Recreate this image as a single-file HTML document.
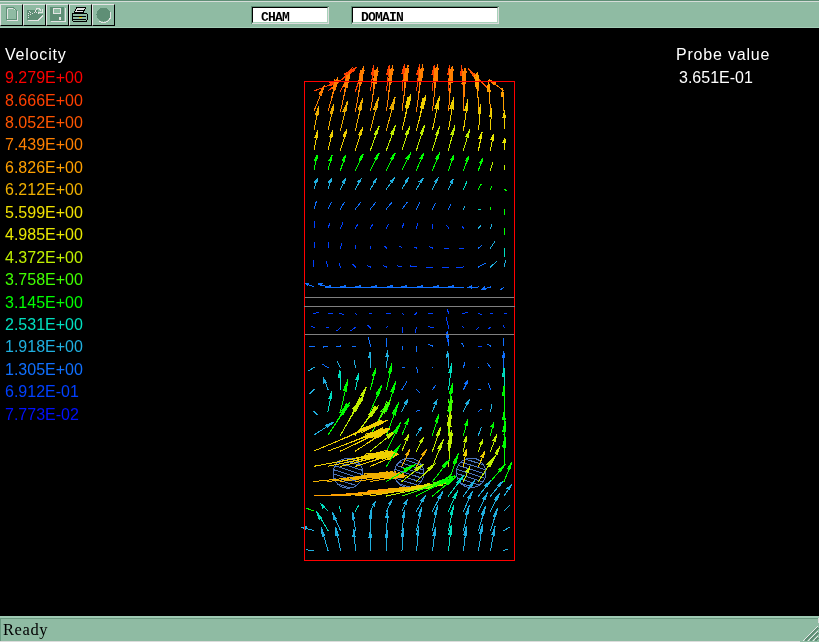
<!DOCTYPE html>
<html><head><meta charset="utf-8"><style>
html,body{margin:0;padding:0;}
body{width:819px;height:642px;overflow:hidden;background:#000;position:relative;font-family:"Liberation Sans",sans-serif;}
.abs{position:absolute;}
#tb{left:0;top:0;width:819px;height:28px;background:#8fbba3;}
#tb .r0{left:0;top:0;width:819px;height:1px;background:#5f8f76;}
#tb .r1{left:0;top:1px;width:819px;height:1px;background:#d4dcd8;}
#tb .r26{left:0;top:27px;width:819px;height:1px;background:#a3cdb6;}
.btn{top:4px;width:23px;height:22px;box-sizing:border-box;border-top:1px solid #e4e4e4;border-left:1px solid #e4e4e4;border-right:1px solid #000;border-bottom:1px solid #000;}
.fld{top:6px;height:18px;box-sizing:border-box;background:#dcdcdc;border-top:1px solid #5f8f76;border-left:1px solid #5f8f76;}
.fld .in{left:0;top:0;right:0;bottom:1px;box-sizing:border-box;background:#fff;border-top:1px solid #000;border-left:1px solid #000;border-right:1px solid #a8d2ba;border-bottom:1px solid #a8d2ba;right:1px;}
.fld span{will-change:transform;font-family:"Liberation Mono",monospace;font-weight:bold;font-size:13px;line-height:13px;color:#000;letter-spacing:-0.8px;}
.leg{left:5px;font-size:16px;line-height:18px;white-space:nowrap;will-change:transform;}
#sb{left:0;top:616px;width:819px;height:26px;background:#8fbba3;}
</style></head><body>

<div id="tb" class="abs"><div class="abs r0"></div><div class="abs r1"></div><div class="abs r26"></div>
<div class="abs btn" style="left:0px"></div>
<div class="abs btn" style="left:23px"></div>
<div class="abs btn" style="left:46px"></div>
<div class="abs btn" style="left:69px"></div>
<div class="abs btn" style="left:92px"></div>
<div class="abs fld" style="left:251px;width:78px;"><div class="abs in"></div><span class="abs" style="left:9px;top:4px">CHAM</span></div>
<div class="abs fld" style="left:351px;width:148px;"><div class="abs in"></div><span class="abs" style="left:9px;top:4px">DOMAIN</span></div>
<svg class="abs" style="left:0;top:0" width="120" height="28" viewBox="0 0 120 28" shape-rendering="crispEdges">
<g fill="none" stroke-width="1">
<path d="M6.5 7.5H13.5L16.5 10.5V19.5H6.5Z" stroke="#5f8f76"/>
<path d="M7.5 8.5H13V11H15.5V18.5H7.5Z" fill="#8fbba3" stroke="#e4e4e4" stroke-width="0" />
<path d="M7.5 8.5V18.5M8 8.5H12.5" stroke="#e4e4e4"/>
<path d="M17.5 11V20.5H7" stroke="#e4e4e4"/>
<rect x="14" y="9" width="1" height="1" fill="#e4e4e4"/>
<path d="M27 10H38V20H27Z" fill="#5f8f76"/>
<path d="M29 14H43L38 20H27Z" fill="#5f8f76"/>
<path d="M28 20.5H38L43 15.5" stroke="#e4e4e4"/>
<path d="M35.5 11.5V10.5L37 8.5H39L41 10.5" stroke="#e4e4e4"/>
<path d="M42 9V12H39" stroke="#e4e4e4"/>
<g fill="#e4e4e4"><rect x="28" y="13" width="1" height="1"/><rect x="28" y="15" width="1" height="1"/><rect x="28" y="17" width="1" height="1"/><rect x="30" y="12" width="1" height="1"/><rect x="30" y="14" width="1" height="1"/><rect x="32" y="13" width="1" height="1"/><rect x="29" y="11" width="1" height="1"/><rect x="34" y="12" width="1" height="1"/><rect x="36" y="12" width="1" height="1"/><rect x="38" y="12" width="1" height="2"/></g>
<rect x="50" y="7" width="14" height="14" fill="#5f8f76"/>
<rect x="53.5" y="8.5" width="7" height="5" fill="#8fbba3" stroke="#e4e4e4"/>
<rect x="59" y="17" width="2" height="3" fill="#e4e4e4"/>
<path d="M51 21.5H65.5V8" stroke="#e4e4e4"/>
<path d="M76.5 7.5H85.5L83.5 12.5H74.5Z" fill="#e4e4e4" stroke="#000"/>
<path d="M77 10H84" stroke="#000"/>
<path d="M72.5 13.5H86.5L87.5 15V19.5L86 21.5H73.5L72.5 20Z" fill="#8fbba3" stroke="#000"/>
<path d="M73 16.5H86M73 19H86" stroke="#000"/>
<rect x="79" y="17" width="3" height="1" fill="#e8c800"/>
<circle cx="103.5" cy="14.5" r="7" fill="#5f8f76"/>
<path d="M110 12A7.3 7.3 0 0 1 99 21" stroke="#e4e4e4"/>
</g>
</svg>
</div>
<div class="abs leg" style="top:46px;color:#fff;letter-spacing:0.8px">Velocity</div>
<div class="abs leg" style="top:69.0px;color:#ff0000">9.279E+00</div>
<div class="abs leg" style="top:91.5px;color:#ff4000">8.666E+00</div>
<div class="abs leg" style="top:113.9px;color:#ff5500">8.052E+00</div>
<div class="abs leg" style="top:136.3px;color:#ff8000">7.439E+00</div>
<div class="abs leg" style="top:158.8px;color:#ffa000">6.826E+00</div>
<div class="abs leg" style="top:181.2px;color:#f0b000">6.212E+00</div>
<div class="abs leg" style="top:203.7px;color:#f0e000">5.599E+00</div>
<div class="abs leg" style="top:226.2px;color:#e8e800">4.985E+00</div>
<div class="abs leg" style="top:248.6px;color:#c0f000">4.372E+00</div>
<div class="abs leg" style="top:271.0px;color:#40ff00">3.758E+00</div>
<div class="abs leg" style="top:293.5px;color:#00ff00">3.145E+00</div>
<div class="abs leg" style="top:315.9px;color:#00e0c0">2.531E+00</div>
<div class="abs leg" style="top:338.4px;color:#20b0e0">1.918E+00</div>
<div class="abs leg" style="top:360.8px;color:#1070ff">1.305E+00</div>
<div class="abs leg" style="top:383.3px;color:#0040ff">6.912E-01</div>
<div class="abs leg" style="top:405.8px;color:#0010ff">7.773E-02</div>
<div class="abs leg" style="left:676px;top:46px;color:#fff;letter-spacing:0.8px">Probe value</div>
<div class="abs leg" style="left:679px;top:69px;color:#fff">3.651E-01</div>
<svg class="abs" style="left:0;top:0" width="819" height="642" viewBox="0 0 819 642" shape-rendering="crispEdges">
<g fill="none" stroke-width="1" stroke-linecap="square"><defs><clipPath id="cc0"><circle cx="348.0" cy="473.3" r="14.9"/></clipPath><clipPath id="cc1"><circle cx="409.2" cy="473.0" r="14.8"/></clipPath><clipPath id="cc2"><circle cx="471.1" cy="472.8" r="14.8"/></clipPath></defs><circle cx="348.0" cy="473.3" r="14.9" stroke="#4c74bc" fill="none"/><path clip-path="url(#cc0)" d="M331.1 443.1L364.9 453.9M331.1 447.4L364.9 458.2M331.1 451.7L364.9 462.5M331.1 456.0L364.9 466.8M331.1 460.3L364.9 471.1M331.1 464.6L364.9 475.4M331.1 468.9L364.9 479.7M331.1 473.2L364.9 484.0M331.1 477.5L364.9 488.3M331.1 481.8L364.9 492.6M331.1 486.1L364.9 496.9M331.1 490.4L364.9 501.2M331.1 494.7L364.9 505.5" stroke="#4c74bc" stroke-dasharray="3 1"/><circle cx="409.2" cy="473.0" r="14.8" stroke="#4c74bc" fill="none"/><path clip-path="url(#cc1)" d="M392.4 442.8L426.0 453.6M392.4 447.1L426.0 457.9M392.4 451.4L426.0 462.2M392.4 455.7L426.0 466.5M392.4 460.0L426.0 470.8M392.4 464.3L426.0 475.1M392.4 468.6L426.0 479.4M392.4 472.9L426.0 483.7M392.4 477.2L426.0 488.0M392.4 481.5L426.0 492.3M392.4 485.8L426.0 496.6M392.4 490.1L426.0 500.9M392.4 494.4L426.0 505.2" stroke="#4c74bc" stroke-dasharray="3 1"/><circle cx="471.1" cy="472.8" r="14.8" stroke="#4c74bc" fill="none"/><path clip-path="url(#cc2)" d="M454.3 442.6L487.9 453.4M454.3 446.9L487.9 457.7M454.3 451.2L487.9 462.0M454.3 455.5L487.9 466.3M454.3 459.8L487.9 470.6M454.3 464.1L487.9 474.9M454.3 468.4L487.9 479.2M454.3 472.7L487.9 483.5M454.3 477.0L487.9 487.8M454.3 481.3L487.9 492.1M454.3 485.6L487.9 496.4M454.3 489.9L487.9 500.7M454.3 494.2L487.9 505.0" stroke="#4c74bc" stroke-dasharray="3 1"/><path d="M314.0 91.0L340.0 81.0" stroke="#ff4000"/><path d="M340.0 81.0L330.0 82.9L331.0 85.4Z" fill="#ff4000" fill-opacity="0.90" stroke="#ff4000" stroke-width="1"/><path d="M328.0 91.0L356.4 67.4" stroke="#ff4000"/><path d="M356.4 67.4L344.6 74.0L346.9 76.8Z" fill="#ff4000" fill-opacity="0.25" stroke="#ff4000" stroke-width="1"/><path d="M340.8 80.4L352.5 67.4" stroke="#ff4000"/><path d="M345.0 76.8L354.9 70.2" stroke="#ff4000"/><path d="M336.5 83.9L353.4 68.4" stroke="#ff4000"/><path d="M340.5 91.0L350.5 72.0" stroke="#ff4000"/><path d="M350.5 72.0L345.5 78.1L347.6 79.2Z" fill="#ff4000" fill-opacity="0.90" stroke="#ff4000" stroke-width="1"/><path d="M355.5 91.0L363.5 67.0" stroke="#ff4000"/><path d="M363.5 67.0L359.1 75.1L361.4 75.9Z" fill="#ff4000" fill-opacity="0.90" stroke="#ff4000" stroke-width="1"/><path d="M370.5 91.0L373.8 66.0" stroke="#ff4000"/><path d="M373.8 66.0L371.0 74.8L373.4 75.1Z" fill="#ff4000" fill-opacity="0.90" stroke="#ff4000" stroke-width="1"/><path d="M386.5 91.0L389.3 65.0" stroke="#ff4000"/><path d="M389.3 65.0L386.6 74.2L389.1 74.5Z" fill="#ff4000" fill-opacity="0.90" stroke="#ff4000" stroke-width="1"/><path d="M402.0 91.0L404.4 64.5" stroke="#ff4000"/><path d="M404.4 64.5L401.8 73.9L404.4 74.1Z" fill="#ff4000" fill-opacity="0.90" stroke="#ff4000" stroke-width="1"/><path d="M416.5 91.0L419.5 65.0" stroke="#ff4000"/><path d="M419.5 65.0L416.7 74.2L419.3 74.5Z" fill="#ff4000" fill-opacity="0.90" stroke="#ff4000" stroke-width="1"/><path d="M432.5 91.0L434.2 65.5" stroke="#ff4000"/><path d="M434.2 65.5L431.9 74.6L434.4 74.7Z" fill="#ff4000" fill-opacity="0.90" stroke="#ff4000" stroke-width="1"/><path d="M448.5 91.0L449.5 66.0" stroke="#ff4000"/><path d="M449.5 66.0L447.5 74.9L450.0 75.0Z" fill="#ff4000" fill-opacity="0.90" stroke="#ff4000" stroke-width="1"/><path d="M463.5 91.0L461.5 66.0" stroke="#ff4000"/><path d="M461.5 66.0L460.6 75.1L463.0 74.9Z" fill="#ff4000" fill-opacity="0.90" stroke="#ff4000" stroke-width="1"/><path d="M478.5 91.0L477.0 73.0" stroke="#ff8000"/><path d="M477.0 73.0L475.9 79.6L478.3 79.4Z" fill="#ff8000" fill-opacity="0.90" stroke="#ff8000" stroke-width="1"/><path d="M490.5 91.0L468.5 69.0" stroke="#ff5500"/><path d="M468.5 69.0L475.0 78.4L477.1 76.2Z" fill="#ff5500" fill-opacity="0.90" stroke="#ff5500" stroke-width="1"/><path d="M504.0 91.0L489.5 80.0" stroke="#ff8000"/><path d="M489.5 80.0L495.7 82.7L494.2 84.6Z" fill="#ff8000" fill-opacity="0.90" stroke="#ff8000" stroke-width="1"/><path d="M314.0 111.0L324.5 85.5" stroke="#ff8000"/><path d="M324.5 85.5L319.1 94.0L321.5 95.0Z" fill="#ff8000" fill-opacity="0.90" stroke="#ff8000" stroke-width="1"/><path d="M328.0 111.0L338.0 77.4" stroke="#ff8000"/><path d="M338.0 77.4L332.2 88.8L335.5 89.8Z" fill="#ff8000" fill-opacity="0.25" stroke="#ff8000" stroke-width="1"/><path d="M332.5 95.9L334.8 79.4" stroke="#ff8000"/><path d="M334.0 90.8L338.4 80.4" stroke="#ff8000"/><path d="M331.0 100.9L336.0 79.7" stroke="#ff8000"/><path d="M340.5 111.0L349.5 73.0" stroke="#ff8000"/><path d="M349.5 73.0L343.8 86.1L347.5 87.0Z" fill="#ff8000" fill-opacity="0.25" stroke="#ff8000" stroke-width="1"/><path d="M344.6 93.9L346.3 75.5" stroke="#ff8000"/><path d="M345.9 88.2L349.9 76.3" stroke="#ff8000"/><path d="M343.2 99.6L347.6 75.8" stroke="#ff8000"/><path d="M355.5 111.0L363.5 67.0" stroke="#ff8000"/><path d="M363.5 67.0L358.1 82.4L361.9 83.1Z" fill="#ff8000" fill-opacity="0.25" stroke="#ff8000" stroke-width="1"/><path d="M359.1 91.2L360.4 70.1" stroke="#ff8000"/><path d="M360.3 84.6L364.0 70.7" stroke="#ff8000"/><path d="M357.9 97.8L361.7 70.3" stroke="#ff8000"/><path d="M370.5 111.0L377.5 67.5" stroke="#ff8000"/><path d="M377.5 67.5L372.4 82.7L376.3 83.4Z" fill="#ff8000" fill-opacity="0.25" stroke="#ff8000" stroke-width="1"/><path d="M373.6 91.4L374.5 70.6" stroke="#ff8000"/><path d="M374.7 84.9L378.1 71.2" stroke="#ff8000"/><path d="M372.6 98.0L375.8 70.8" stroke="#ff8000"/><path d="M386.5 111.0L392.5 66.0" stroke="#ff8000"/><path d="M392.5 66.0L387.8 81.9L391.6 82.4Z" fill="#ff8000" fill-opacity="0.25" stroke="#ff8000" stroke-width="1"/><path d="M389.2 90.8L389.5 69.3" stroke="#ff8000"/><path d="M390.1 84.0L393.2 69.8" stroke="#ff8000"/><path d="M388.3 97.5L390.8 69.4" stroke="#ff8000"/><path d="M402.0 111.0L408.1 65.1" stroke="#ff8000"/><path d="M408.1 65.1L403.3 81.3L407.2 81.8Z" fill="#ff8000" fill-opacity="0.25" stroke="#ff8000" stroke-width="1"/><path d="M404.7 90.3L405.1 68.4" stroke="#ff8000"/><path d="M405.7 83.5L408.8 68.9" stroke="#ff8000"/><path d="M403.8 97.2L406.4 68.6" stroke="#ff8000"/><path d="M416.5 111.0L422.8 65.0" stroke="#ff8000"/><path d="M422.8 65.0L418.0 81.2L421.8 81.7Z" fill="#ff8000" fill-opacity="0.25" stroke="#ff8000" stroke-width="1"/><path d="M419.3 90.3L419.8 68.3" stroke="#ff8000"/><path d="M420.3 83.4L423.5 68.8" stroke="#ff8000"/><path d="M418.4 97.2L421.1 68.5" stroke="#ff8000"/><path d="M432.5 111.0L437.5 65.0" stroke="#ff8000"/><path d="M437.5 65.0L433.1 81.3L437.0 81.7Z" fill="#ff8000" fill-opacity="0.25" stroke="#ff8000" stroke-width="1"/><path d="M434.8 90.3L434.6 68.4" stroke="#ff8000"/><path d="M435.5 83.4L438.3 68.8" stroke="#ff8000"/><path d="M434.0 97.2L435.9 68.6" stroke="#ff8000"/><path d="M448.5 111.0L452.3 66.0" stroke="#ff8000"/><path d="M452.3 66.0L448.3 82.0L452.2 82.3Z" fill="#ff8000" fill-opacity="0.25" stroke="#ff8000" stroke-width="1"/><path d="M450.2 90.8L449.5 69.4" stroke="#ff8000"/><path d="M450.8 84.0L453.2 69.7" stroke="#ff8000"/><path d="M449.6 97.5L450.8 69.5" stroke="#ff8000"/><path d="M463.5 111.0L465.1 68.0" stroke="#ff8000"/><path d="M465.1 68.0L461.9 83.4L465.8 83.5Z" fill="#ff8000" fill-opacity="0.25" stroke="#ff8000" stroke-width="1"/><path d="M464.2 91.7L462.5 71.3" stroke="#ff8000"/><path d="M464.5 85.2L466.2 71.5" stroke="#ff8000"/><path d="M464.0 98.1L463.8 71.4" stroke="#ff8000"/><path d="M478.5 111.0L477.1 72.5" stroke="#ffa000"/><path d="M477.1 72.5L475.1 86.5L478.9 86.3Z" fill="#ffa000" fill-opacity="0.25" stroke="#ffa000" stroke-width="1"/><path d="M477.9 93.7L474.7 75.7" stroke="#ffa000"/><path d="M477.7 87.9L478.4 75.5" stroke="#ffa000"/><path d="M478.1 99.5L476.0 75.6" stroke="#ffa000"/><path d="M490.5 111.0L488.5 81.0" stroke="#ffa000"/><path d="M488.5 81.0L487.3 91.9L490.2 91.7Z" fill="#ffa000" fill-opacity="0.90" stroke="#ffa000" stroke-width="1"/><path d="M504.0 111.0L502.5 89.0" stroke="#ffa000"/><path d="M502.5 89.0L501.4 97.0L503.8 96.9Z" fill="#ffa000" fill-opacity="0.90" stroke="#ffa000" stroke-width="1"/><path d="M314.0 130.0L319.0 106.0" stroke="#f0b000"/><path d="M319.0 106.0L315.6 114.3L318.0 114.8Z" fill="#f0b000" fill-opacity="0.90" stroke="#f0b000" stroke-width="1"/><path d="M328.0 130.0L334.0 104.0" stroke="#f0b000"/><path d="M334.0 104.0L330.1 113.0L332.7 113.6Z" fill="#f0b000" fill-opacity="0.90" stroke="#f0b000" stroke-width="1"/><path d="M340.5 130.0L347.5 101.5" stroke="#f0b000"/><path d="M347.5 101.5L343.1 111.3L345.9 112.0Z" fill="#f0b000" fill-opacity="0.90" stroke="#f0b000" stroke-width="1"/><path d="M355.5 130.0L362.5 99.0" stroke="#f0b000"/><path d="M362.5 99.0L358.0 109.7L361.0 110.4Z" fill="#f0b000" fill-opacity="0.90" stroke="#f0b000" stroke-width="1"/><path d="M370.5 130.0L378.5 98.0" stroke="#f0b000"/><path d="M378.5 98.0L373.5 109.0L376.7 109.8Z" fill="#f0b000" fill-opacity="0.90" stroke="#f0b000" stroke-width="1"/><path d="M386.5 130.0L395.2 97.0" stroke="#f0b000"/><path d="M395.2 97.0L389.9 108.3L393.1 109.2Z" fill="#f0b000" fill-opacity="0.90" stroke="#f0b000" stroke-width="1"/><path d="M402.0 130.0L410.5 95.0" stroke="#f0d000"/><path d="M410.5 95.0L405.2 107.0L408.6 107.9Z" fill="#f0d000" fill-opacity="0.25" stroke="#f0d000" stroke-width="1"/><path d="M405.8 114.2L407.4 97.2" stroke="#f0d000"/><path d="M407.1 109.0L411.0 98.1" stroke="#f0d000"/><path d="M404.6 119.5L408.7 97.5" stroke="#f0d000"/><path d="M416.5 130.0L425.5 96.0" stroke="#f0d000"/><path d="M425.5 96.0L420.1 107.7L423.4 108.5Z" fill="#f0d000" fill-opacity="0.25" stroke="#f0d000" stroke-width="1"/><path d="M420.6 114.7L422.4 98.1" stroke="#f0d000"/><path d="M421.9 109.6L425.9 99.0" stroke="#f0d000"/><path d="M419.2 119.8L423.6 98.4" stroke="#f0d000"/><path d="M432.5 130.0L439.5 97.0" stroke="#f0d000"/><path d="M439.5 97.0L434.8 108.4L438.1 109.1Z" fill="#f0d000" fill-opacity="0.90" stroke="#f0d000" stroke-width="1"/><path d="M448.5 130.0L454.0 97.0" stroke="#f0d000"/><path d="M454.0 97.0L449.9 108.5L453.1 109.1Z" fill="#f0d000" fill-opacity="0.90" stroke="#f0d000" stroke-width="1"/><path d="M463.5 130.0L467.9 100.0" stroke="#f0d000"/><path d="M467.9 100.0L464.4 110.5L467.3 110.9Z" fill="#f0d000" fill-opacity="0.90" stroke="#f0d000" stroke-width="1"/><path d="M478.5 130.0L481.0 104.0" stroke="#f0d000"/><path d="M481.0 104.0L478.4 113.2L480.9 113.4Z" fill="#f0d000" fill-opacity="0.90" stroke="#f0d000" stroke-width="1"/><path d="M490.5 130.0L491.5 109.0" stroke="#f0d000"/><path d="M491.5 109.0L489.5 116.5L491.9 116.6Z" fill="#f0d000" fill-opacity="0.90" stroke="#f0d000" stroke-width="1"/><path d="M504.0 130.0L504.7 111.0" stroke="#f0d000"/><path d="M504.7 111.0L502.8 117.8L505.2 117.9Z" fill="#f0d000" fill-opacity="0.90" stroke="#f0d000" stroke-width="1"/><path d="M314.0 150.0L318.0 130.4" stroke="#f0d000"/><path d="M318.0 130.4L315.0 137.1L317.3 137.6Z" fill="#f0d000" fill-opacity="0.90" stroke="#f0d000" stroke-width="1"/><path d="M328.0 150.0L333.0 130.0" stroke="#f0d000"/><path d="M333.0 130.0L329.6 136.8L332.0 137.4Z" fill="#f0d000" fill-opacity="0.90" stroke="#f0d000" stroke-width="1"/><path d="M340.5 150.0L347.0 129.0" stroke="#f0d000"/><path d="M347.0 129.0L343.1 136.1L345.4 136.8Z" fill="#f0d000" fill-opacity="0.90" stroke="#f0d000" stroke-width="1"/><path d="M355.5 150.0L362.9 127.0" stroke="#f0d000"/><path d="M362.9 127.0L358.7 134.8L361.0 135.5Z" fill="#f0d000" fill-opacity="0.90" stroke="#f0d000" stroke-width="1"/><path d="M370.5 150.0L379.2 126.0" stroke="#c0f000"/><path d="M379.2 126.0L374.5 134.1L376.8 134.9Z" fill="#c0f000" fill-opacity="0.90" stroke="#c0f000" stroke-width="1"/><path d="M386.5 150.0L395.5 125.5" stroke="#c0f000"/><path d="M395.5 125.5L390.7 133.7L393.1 134.6Z" fill="#c0f000" fill-opacity="0.90" stroke="#c0f000" stroke-width="1"/><path d="M402.0 150.0L410.0 126.0" stroke="#c0f000"/><path d="M410.0 126.0L405.6 134.1L407.9 134.9Z" fill="#c0f000" fill-opacity="0.90" stroke="#c0f000" stroke-width="1"/><path d="M416.5 150.0L424.5 125.5" stroke="#c0f000"/><path d="M424.5 125.5L420.0 133.8L422.4 134.6Z" fill="#c0f000" fill-opacity="0.90" stroke="#c0f000" stroke-width="1"/><path d="M432.5 150.0L439.5 127.0" stroke="#c0f000"/><path d="M439.5 127.0L435.4 134.8L437.7 135.5Z" fill="#c0f000" fill-opacity="0.90" stroke="#c0f000" stroke-width="1"/><path d="M448.5 150.0L454.9 126.0" stroke="#c0f000"/><path d="M454.9 126.0L451.0 134.2L453.4 134.8Z" fill="#c0f000" fill-opacity="0.90" stroke="#c0f000" stroke-width="1"/><path d="M463.5 150.0L469.5 130.0" stroke="#c0f000"/><path d="M469.5 130.0L465.8 136.7L468.1 137.4Z" fill="#c0f000" fill-opacity="0.90" stroke="#c0f000" stroke-width="1"/><path d="M478.5 150.0L482.1 132.0" stroke="#e8e800"/><path d="M482.1 132.0L479.2 138.2L481.6 138.6Z" fill="#e8e800" fill-opacity="0.90" stroke="#e8e800" stroke-width="1"/><path d="M490.5 150.0L493.3 134.5" stroke="#e8e800"/><path d="M493.3 134.5L490.7 139.8L493.1 140.2Z" fill="#e8e800" fill-opacity="0.90" stroke="#e8e800" stroke-width="1"/><path d="M504.0 150.0L505.0 138.5" stroke="#e8e800"/><path d="M505.0 138.5L503.0 142.5L505.4 142.7Z" fill="#e8e800" fill-opacity="0.90" stroke="#e8e800" stroke-width="1"/><path d="M314.0 170.0L317.3 155.0" stroke="#00ff00"/><path d="M317.3 155.0L314.5 160.1L316.9 160.6Z" fill="#00ff00" fill-opacity="0.90" stroke="#00ff00" stroke-width="1"/><path d="M328.0 170.0L332.0 155.5" stroke="#00ff00"/><path d="M332.0 155.5L329.0 160.3L331.3 160.9Z" fill="#00ff00" fill-opacity="0.90" stroke="#00ff00" stroke-width="1"/><path d="M340.5 170.0L345.5 155.5" stroke="#00ff00"/><path d="M345.5 155.5L342.2 160.2L344.5 161.0Z" fill="#00ff00" fill-opacity="0.90" stroke="#00ff00" stroke-width="1"/><path d="M355.5 170.0L363.2 154.0" stroke="#00ff00"/><path d="M363.2 154.0L359.0 159.1L361.1 160.1Z" fill="#00ff00" fill-opacity="0.90" stroke="#00ff00" stroke-width="1"/><path d="M370.5 170.0L379.2 153.0" stroke="#00ff00"/><path d="M379.2 153.0L374.6 158.4L376.8 159.5Z" fill="#00ff00" fill-opacity="0.90" stroke="#00ff00" stroke-width="1"/><path d="M386.5 170.0L395.2 153.0" stroke="#00ff00"/><path d="M395.2 153.0L390.6 158.4L392.8 159.5Z" fill="#00ff00" fill-opacity="0.90" stroke="#00ff00" stroke-width="1"/><path d="M402.0 170.0L410.7 153.0" stroke="#00ff00"/><path d="M410.7 153.0L406.1 158.4L408.3 159.5Z" fill="#00ff00" fill-opacity="0.90" stroke="#00ff00" stroke-width="1"/><path d="M416.5 170.0L423.9 153.0" stroke="#00ff00"/><path d="M423.9 153.0L419.8 158.5L422.0 159.4Z" fill="#00ff00" fill-opacity="0.90" stroke="#00ff00" stroke-width="1"/><path d="M432.5 170.0L439.7 153.0" stroke="#00ff00"/><path d="M439.7 153.0L435.6 158.5L437.8 159.4Z" fill="#00ff00" fill-opacity="0.90" stroke="#00ff00" stroke-width="1"/><path d="M448.5 170.0L454.1 155.0" stroke="#00ff00"/><path d="M454.1 155.0L450.6 159.8L452.8 160.7Z" fill="#00ff00" fill-opacity="0.90" stroke="#00ff00" stroke-width="1"/><path d="M463.5 170.0L468.7 156.4" stroke="#00ff00"/><path d="M468.7 156.4L465.3 160.7L467.6 161.6Z" fill="#00ff00" fill-opacity="0.90" stroke="#00ff00" stroke-width="1"/><path d="M478.5 170.0L482.5 159.0" stroke="#00ff00"/><path d="M482.5 159.0L479.6 162.4L481.8 163.2Z" fill="#00ff00" fill-opacity="0.90" stroke="#00ff00" stroke-width="1"/><path d="M490.5 170.0L493.0 162.0" stroke="#c0f000"/><path d="M504.0 170.0L505.0 165.4" stroke="#c0f000"/><path d="M314.0 189.0L317.3 179.0" stroke="#20b0e0"/><path d="M317.3 179.0L314.6 182.1L316.9 182.9Z" fill="#20b0e0" fill-opacity="0.90" stroke="#20b0e0" stroke-width="1"/><path d="M328.0 189.0L331.3 179.0" stroke="#20b0e0"/><path d="M331.3 179.0L328.6 182.1L330.9 182.9Z" fill="#20b0e0" fill-opacity="0.90" stroke="#20b0e0" stroke-width="1"/><path d="M340.5 189.0L345.5 179.0" stroke="#20b0e0"/><path d="M345.5 179.0L342.3 181.9L344.4 183.0Z" fill="#20b0e0" fill-opacity="0.90" stroke="#20b0e0" stroke-width="1"/><path d="M355.5 189.0L361.0 179.0" stroke="#20b0e0"/><path d="M361.0 179.0L357.6 181.8L359.7 183.0Z" fill="#20b0e0" fill-opacity="0.90" stroke="#20b0e0" stroke-width="1"/><path d="M370.5 189.0L376.5 179.0" stroke="#20b0e0"/><path d="M376.5 179.0L373.0 181.8L375.0 183.0Z" fill="#20b0e0" fill-opacity="0.90" stroke="#20b0e0" stroke-width="1"/><path d="M386.5 189.0L394.5 178.0" stroke="#20b0e0"/><path d="M394.5 178.0L390.3 181.0L392.3 182.4Z" fill="#20b0e0" fill-opacity="0.90" stroke="#20b0e0" stroke-width="1"/><path d="M402.0 189.0L408.5 178.0" stroke="#20b0e0"/><path d="M408.5 178.0L404.8 181.1L406.8 182.4Z" fill="#20b0e0" fill-opacity="0.90" stroke="#20b0e0" stroke-width="1"/><path d="M416.5 189.0L423.0 178.4" stroke="#20b0e0"/><path d="M423.0 178.4L419.3 181.4L421.3 182.6Z" fill="#20b0e0" fill-opacity="0.90" stroke="#20b0e0" stroke-width="1"/><path d="M432.5 189.0L437.7 178.7" stroke="#20b0e0"/><path d="M437.7 178.7L434.4 181.7L436.5 182.8Z" fill="#20b0e0" fill-opacity="0.90" stroke="#20b0e0" stroke-width="1"/><path d="M448.5 189.0L453.2 179.5" stroke="#20b0e0"/><path d="M453.2 179.5L450.1 182.2L452.2 183.3Z" fill="#20b0e0" fill-opacity="0.90" stroke="#20b0e0" stroke-width="1"/><path d="M463.5 189.0L467.1 181.2" stroke="#00e0c0"/><path d="M478.5 189.0L481.0 184.4" stroke="#00ff00"/><path d="M490.5 189.0L492.1 186.0" stroke="#00ff00"/><path d="M504.0 189.0L506.4 190.6" stroke="#00ff00"/><path d="M314.0 209.0L316.3 201.6" stroke="#1070ff"/><path d="M328.0 209.0L331.3 202.5" stroke="#1070ff"/><path d="M340.5 209.0L344.1 202.5" stroke="#1070ff"/><path d="M355.5 209.0L360.5 202.5" stroke="#1070ff"/><path d="M370.5 209.0L375.5 202.5" stroke="#1070ff"/><path d="M386.5 209.0L391.7 202.5" stroke="#1070ff"/><path d="M402.0 209.0L407.0 202.5" stroke="#1070ff"/><path d="M416.5 209.0L419.8 202.5" stroke="#1070ff"/><path d="M432.5 209.0L435.3 203.3" stroke="#1070ff"/><path d="M448.5 209.0L451.0 204.0" stroke="#1070ff"/><path d="M463.5 209.0L465.1 206.0" stroke="#20b0e0"/><path d="M478.5 209.0L480.5 209.0" stroke="#00e0c0"/><path d="M490.5 209.0L490.5 207.0" stroke="#00ff00"/><path d="M504.0 209.0L504.0 214.0" stroke="#00ff00"/><path d="M314.0 228.0L314.8 221.5" stroke="#0040ff"/><path d="M328.0 228.0L330.0 223.0" stroke="#0040ff"/><path d="M340.5 228.0L342.8 223.0" stroke="#0040ff"/><path d="M355.5 228.0L357.5 224.7" stroke="#0040ff"/><path d="M370.5 228.0L372.5 224.7" stroke="#0040ff"/><path d="M386.5 228.0L388.8 224.0" stroke="#0040ff"/><path d="M402.0 228.0L403.6 224.0" stroke="#0040ff"/><path d="M416.5 228.0L417.8 224.0" stroke="#0040ff"/><path d="M432.5 228.0L432.5 224.7" stroke="#0040ff"/><path d="M448.5 228.0L446.9 225.5" stroke="#0040ff"/><path d="M463.5 228.0L462.2 226.4" stroke="#0040ff"/><path d="M478.5 228.0L480.5 226.0" stroke="#20b0e0"/><path d="M490.5 228.0L492.1 224.0" stroke="#20b0e0"/><path d="M504.0 228.0L504.0 234.0" stroke="#00ff00"/><path d="M314.0 248.0L315.0 242.0" stroke="#0040ff"/><path d="M328.0 248.0L328.8 242.3" stroke="#0040ff"/><path d="M340.5 248.0L341.5 244.0" stroke="#0040ff"/><path d="M355.5 248.0L355.5 245.5" stroke="#0040ff"/><path d="M370.5 248.0L370.5 246.5" stroke="#0040ff"/><path d="M386.5 248.0L385.0 246.5" stroke="#0040ff"/><path d="M402.0 248.0L400.0 246.5" stroke="#0040ff"/><path d="M416.5 248.0L414.0 247.0" stroke="#0040ff"/><path d="M432.5 248.0L429.8 247.0" stroke="#0040ff"/><path d="M448.5 248.0L444.5 248.0" stroke="#0040ff"/><path d="M463.5 248.0L459.5 248.0" stroke="#0040ff"/><path d="M478.5 248.0L481.8 245.5" stroke="#1070ff"/><path d="M490.5 248.0L494.5 242.0" stroke="#20b0e0"/><path d="M504.0 248.0L504.0 256.0" stroke="#00e0c0"/><path d="M314.0 267.0L313.0 260.0" stroke="#0040ff"/><path d="M328.0 267.0L326.4 261.6" stroke="#0040ff"/><path d="M340.5 267.0L339.2 264.0" stroke="#0040ff"/><path d="M355.5 267.0L353.0 264.5" stroke="#0040ff"/><path d="M370.5 267.0L367.2 265.7" stroke="#0040ff"/><path d="M386.5 267.0L383.2 265.7" stroke="#0040ff"/><path d="M402.0 267.0L397.0 265.7" stroke="#0040ff"/><path d="M416.5 267.0L410.5 266.0" stroke="#0040ff"/><path d="M432.5 267.0L426.0 267.0" stroke="#0040ff"/><path d="M448.5 267.0L442.0 267.0" stroke="#0040ff"/><path d="M463.5 267.0L456.5 268.0" stroke="#0040ff"/><path d="M478.5 267.0L485.0 263.4" stroke="#1070ff"/><path d="M490.5 267.0L496.2 261.8" stroke="#20b0e0"/><path d="M504.0 267.0L506.0 260.0" stroke="#20b0e0"/><path d="M314.0 287.0L304.5 283.0" stroke="#1070ff"/><path d="M304.5 283.0L308.5 283.0L307.6 285.2Z" fill="#1070ff" fill-opacity="0.90" stroke="#1070ff" stroke-width="1"/><path d="M328.0 287.0L318.0 284.0" stroke="#1070ff"/><path d="M318.0 284.0L322.1 283.5L321.4 285.8Z" fill="#1070ff" fill-opacity="0.90" stroke="#1070ff" stroke-width="1"/><path d="M340.5 287.0L325.5 287.0" stroke="#1070ff"/><path d="M325.5 287.0L330.9 285.4L330.9 287.8Z" fill="#1070ff" fill-opacity="0.90" stroke="#1070ff" stroke-width="1"/><path d="M355.5 287.0L340.5 287.0" stroke="#1070ff"/><path d="M340.5 287.0L345.9 285.4L345.9 287.8Z" fill="#1070ff" fill-opacity="0.90" stroke="#1070ff" stroke-width="1"/><path d="M370.5 287.0L355.5 287.0" stroke="#1070ff"/><path d="M355.5 287.0L360.9 285.4L360.9 287.8Z" fill="#1070ff" fill-opacity="0.90" stroke="#1070ff" stroke-width="1"/><path d="M386.5 287.0L371.5 287.0" stroke="#1070ff"/><path d="M371.5 287.0L376.9 285.4L376.9 287.8Z" fill="#1070ff" fill-opacity="0.90" stroke="#1070ff" stroke-width="1"/><path d="M402.0 287.0L387.0 287.0" stroke="#1070ff"/><path d="M387.0 287.0L392.4 285.4L392.4 287.8Z" fill="#1070ff" fill-opacity="0.90" stroke="#1070ff" stroke-width="1"/><path d="M416.5 287.0L401.5 287.0" stroke="#1070ff"/><path d="M401.5 287.0L406.9 285.4L406.9 287.8Z" fill="#1070ff" fill-opacity="0.90" stroke="#1070ff" stroke-width="1"/><path d="M432.5 287.0L417.5 287.0" stroke="#1070ff"/><path d="M417.5 287.0L422.9 285.4L422.9 287.8Z" fill="#1070ff" fill-opacity="0.90" stroke="#1070ff" stroke-width="1"/><path d="M448.5 287.0L433.5 287.0" stroke="#1070ff"/><path d="M433.5 287.0L438.9 285.4L438.9 287.8Z" fill="#1070ff" fill-opacity="0.90" stroke="#1070ff" stroke-width="1"/><path d="M463.5 287.0L448.5 287.0" stroke="#1070ff"/><path d="M448.5 287.0L453.9 285.4L453.9 287.8Z" fill="#1070ff" fill-opacity="0.90" stroke="#1070ff" stroke-width="1"/><path d="M478.5 287.0L468.0 287.5" stroke="#1070ff"/><path d="M468.0 287.5L471.7 285.7L471.8 288.1Z" fill="#1070ff" fill-opacity="0.90" stroke="#1070ff" stroke-width="1"/><path d="M490.5 287.0L481.5 289.5" stroke="#1070ff"/><path d="M481.5 289.5L484.3 287.1L485.0 289.4Z" fill="#1070ff" fill-opacity="0.90" stroke="#1070ff" stroke-width="1"/><path d="M504.0 287.0L501.0 289.5" stroke="#1070ff"/><path d="M314.0 313.8L318.0 312.2" stroke="#0040ff"/><path d="M328.0 313.4L332.2 313.4" stroke="#0040ff"/><path d="M340.0 313.4L344.0 314.9" stroke="#0040ff"/><path d="M355.0 313.0L357.0 315.0" stroke="#0040ff"/><path d="M369.8 313.5L371.9 313.5" stroke="#0040ff"/><path d="M386.0 313.5L390.0 313.5" stroke="#0040ff"/><path d="M402.0 313.0L404.0 315.0" stroke="#0040ff"/><path d="M415.0 314.5L416.7 313.0" stroke="#0040ff"/><path d="M428.0 313.0L433.0 313.5" stroke="#0040ff"/><path d="M447.0 309.0L449.0 314.0" stroke="#0040ff"/><path d="M463.0 313.5L467.5 312.5" stroke="#0040ff"/><path d="M478.0 313.0L481.5 314.5" stroke="#0040ff"/><path d="M490.0 313.3L492.0 313.3" stroke="#0040ff"/><path d="M504.0 313.3L506.0 313.3" stroke="#0040ff"/><path d="M312.0 326.6L314.8 327.5" stroke="#0040ff"/><path d="M326.0 328.0L329.0 327.0" stroke="#0040ff"/><path d="M337.0 330.6L341.0 327.2" stroke="#0040ff"/><path d="M351.0 330.6L355.7 327.2" stroke="#0040ff"/><path d="M367.8 325.2L370.5 328.0" stroke="#0040ff"/><path d="M386.0 328.0L388.0 326.0" stroke="#0040ff"/><path d="M402.3 327.0L402.3 332.0" stroke="#0040ff"/><path d="M415.0 332.6L416.5 327.3" stroke="#0040ff"/><path d="M429.0 326.6L433.0 327.8" stroke="#0040ff"/><path d="M446.4 318.0L448.8 328.0" stroke="#0040ff"/><path d="M462.0 326.0L463.8 328.0" stroke="#0040ff"/><path d="M476.0 330.0L478.7 327.3" stroke="#0040ff"/><path d="M488.0 329.0L490.7 327.3" stroke="#0040ff"/><path d="M503.0 325.3L505.0 328.0" stroke="#0040ff"/><path d="M446.4 332.2L448.5 345.6" stroke="#0040ff"/><path d="M314.0 346.0L309.5 346.0" stroke="#1070ff"/><path d="M328.0 346.0L323.5 347.0" stroke="#1070ff"/><path d="M340.5 346.0L336.0 347.0" stroke="#1070ff"/><path d="M355.5 346.0L352.0 346.0" stroke="#1070ff"/><path d="M370.5 346.0L368.5 338.0" stroke="#1070ff"/><path d="M386.5 346.0L386.5 338.0" stroke="#1070ff"/><path d="M402.0 346.0L402.0 349.5" stroke="#1070ff"/><path d="M416.5 346.0L416.5 351.5" stroke="#1070ff"/><path d="M432.5 346.0L428.5 344.6" stroke="#1070ff"/><path d="M448.5 346.0L447.5 332.0" stroke="#1070ff"/><path d="M447.5 332.0L446.3 337.2L448.7 337.0Z" fill="#1070ff" fill-opacity="0.90" stroke="#1070ff" stroke-width="1"/><path d="M463.5 346.0L461.7 343.0" stroke="#1070ff"/><path d="M478.5 346.0L481.3 346.0" stroke="#0040ff"/><path d="M490.5 346.0L487.0 344.0" stroke="#1070ff"/><path d="M504.0 346.0L503.5 339.0" stroke="#1070ff"/><path d="M314.0 367.6L309.0 370.6" stroke="#20b0e0"/><path d="M328.0 367.6L323.0 364.6" stroke="#1070ff"/><path d="M340.5 367.6L337.5 361.6" stroke="#20b0e0"/><path d="M355.5 367.6L354.2 360.6" stroke="#20b0e0"/><path d="M370.5 367.6L370.0 352.1" stroke="#20b0e0"/><path d="M370.0 352.1L368.6 357.7L371.0 357.7Z" fill="#20b0e0" fill-opacity="0.90" stroke="#20b0e0" stroke-width="1"/><path d="M386.5 367.6L387.8 350.6" stroke="#20b0e0"/><path d="M387.8 350.6L385.7 356.6L388.1 356.8Z" fill="#20b0e0" fill-opacity="0.90" stroke="#20b0e0" stroke-width="1"/><path d="M402.0 367.6L404.5 367.6" stroke="#1070ff"/><path d="M416.5 367.6L418.0 372.6" stroke="#1070ff"/><path d="M432.5 367.6L433.0 368.1" stroke="#1070ff"/><path d="M448.5 367.6L447.7 351.0" stroke="#20b0e0"/><path d="M447.7 351.0L446.4 357.1L448.8 356.9Z" fill="#20b0e0" fill-opacity="0.90" stroke="#20b0e0" stroke-width="1"/><path d="M463.5 367.6L464.9 362.0" stroke="#1070ff"/><path d="M478.5 367.6L479.0 368.1" stroke="#1070ff"/><path d="M490.5 367.6L487.7 363.6" stroke="#1070ff"/><path d="M504.0 367.6L503.8 352.0" stroke="#1070ff"/><path d="M503.8 352.0L502.3 357.6L504.7 357.6Z" fill="#1070ff" fill-opacity="0.90" stroke="#1070ff" stroke-width="1"/><path d="M314.0 389.5L310.0 393.5" stroke="#20b0e0"/><path d="M328.0 389.5L323.7 378.5" stroke="#20b0e0"/><path d="M323.7 378.5L323.8 383.0L326.0 382.2Z" fill="#20b0e0" fill-opacity="0.90" stroke="#20b0e0" stroke-width="1"/><path d="M340.5 389.5L339.8 370.0" stroke="#00e0c0"/><path d="M339.8 370.0L338.5 377.1L340.9 377.0Z" fill="#00e0c0" fill-opacity="0.90" stroke="#00e0c0" stroke-width="1"/><path d="M355.5 389.5L358.5 374.0" stroke="#00e0c0"/><path d="M358.5 374.0L355.8 379.3L358.2 379.7Z" fill="#00e0c0" fill-opacity="0.90" stroke="#00e0c0" stroke-width="1"/><path d="M370.5 389.5L375.9 368.0" stroke="#00ff00"/><path d="M375.9 368.0L372.4 375.4L374.7 375.9Z" fill="#00ff00" fill-opacity="0.90" stroke="#00ff00" stroke-width="1"/><path d="M386.5 389.5L391.9 364.0" stroke="#00ff00"/><path d="M391.9 364.0L388.3 372.8L390.8 373.4Z" fill="#00ff00" fill-opacity="0.90" stroke="#00ff00" stroke-width="1"/><path d="M402.0 389.5L406.7 382.1" stroke="#1070ff"/><path d="M416.5 389.5L419.3 392.3" stroke="#1070ff"/><path d="M432.5 389.5L435.5 385.5" stroke="#1070ff"/><path d="M448.5 389.5L452.0 363.0" stroke="#00e0c0"/><path d="M452.0 363.0L449.0 372.3L451.6 372.7Z" fill="#00e0c0" fill-opacity="0.90" stroke="#00e0c0" stroke-width="1"/><path d="M463.5 389.5L467.7 381.1" stroke="#1070ff"/><path d="M467.7 381.1L464.8 383.4L466.9 384.5Z" fill="#1070ff" fill-opacity="0.90" stroke="#1070ff" stroke-width="1"/><path d="M478.5 389.5L480.5 389.5" stroke="#1070ff"/><path d="M490.5 389.5L488.8 383.9" stroke="#1070ff"/><path d="M504.0 389.5L504.0 368.5" stroke="#00e0c0"/><path d="M504.0 368.5L502.4 376.1L504.8 376.1Z" fill="#00e0c0" fill-opacity="0.90" stroke="#00e0c0" stroke-width="1"/><path d="M314.0 411.3L317.0 414.3" stroke="#20b0e0"/><path d="M328.0 411.3L332.0 391.3" stroke="#00e0c0"/><path d="M332.0 391.3L329.0 398.2L331.3 398.7Z" fill="#00e0c0" fill-opacity="0.90" stroke="#00e0c0" stroke-width="1"/><path d="M340.5 411.3L347.9 379.8" stroke="#00ff00"/><path d="M347.9 379.8L343.2 390.7L346.3 391.4Z" fill="#00ff00" fill-opacity="0.90" stroke="#00ff00" stroke-width="1"/><path d="M355.5 411.3L366.2 387.3" stroke="#c0f000"/><path d="M366.2 387.3L360.8 395.2L363.1 396.3Z" fill="#c0f000" fill-opacity="0.90" stroke="#c0f000" stroke-width="1"/><path d="M370.5 411.3L381.9 385.3" stroke="#00ff00"/><path d="M381.9 385.3L376.1 393.9L378.6 395.0Z" fill="#00ff00" fill-opacity="0.90" stroke="#00ff00" stroke-width="1"/><path d="M386.5 411.3L395.9 381.3" stroke="#00ff00"/><path d="M395.9 381.3L390.6 391.5L393.5 392.4Z" fill="#00ff00" fill-opacity="0.90" stroke="#00ff00" stroke-width="1"/><path d="M402.0 411.3L408.0 399.3" stroke="#20b0e0"/><path d="M408.0 399.3L404.4 402.9L406.6 404.0Z" fill="#20b0e0" fill-opacity="0.90" stroke="#20b0e0" stroke-width="1"/><path d="M416.5 411.3L419.5 410.3" stroke="#1070ff"/><path d="M432.5 411.3L437.0 400.3" stroke="#20b0e0"/><path d="M437.0 400.3L433.9 403.7L436.1 404.6Z" fill="#20b0e0" fill-opacity="0.90" stroke="#20b0e0" stroke-width="1"/><path d="M448.5 411.3L452.5 383.3" stroke="#00ff00"/><path d="M452.5 383.3L449.2 393.1L452.0 393.5Z" fill="#00ff00" fill-opacity="0.90" stroke="#00ff00" stroke-width="1"/><path d="M463.5 411.3L469.1 400.3" stroke="#20b0e0"/><path d="M469.1 400.3L465.7 403.5L467.8 404.6Z" fill="#20b0e0" fill-opacity="0.90" stroke="#20b0e0" stroke-width="1"/><path d="M478.5 411.3L481.3 409.3" stroke="#1070ff"/><path d="M490.5 411.3L491.9 404.3" stroke="#20b0e0"/><path d="M504.0 411.3L504.0 386.3" stroke="#00ff00"/><path d="M504.0 386.3L502.4 395.3L504.8 395.3Z" fill="#00ff00" fill-opacity="0.90" stroke="#00ff00" stroke-width="1"/><path d="M314.0 435.0L334.0 422.0" stroke="#20b0e0"/><path d="M334.0 422.0L325.9 425.3L327.2 427.4Z" fill="#20b0e0" fill-opacity="0.90" stroke="#20b0e0" stroke-width="1"/><path d="M328.0 435.0L350.0 402.0" stroke="#00ff00"/><path d="M350.0 402.0L339.9 412.4L343.2 414.6Z" fill="#00ff00" fill-opacity="0.25" stroke="#00ff00" stroke-width="1"/><path d="M337.9 420.1L346.2 403.3" stroke="#00ff00"/><path d="M341.2 415.2L349.2 405.3" stroke="#00ff00"/><path d="M334.6 425.1L347.2 404.0" stroke="#00ff00"/><path d="M340.5 435.0L363.5 396.0" stroke="#c0f000"/><path d="M363.5 396.0L353.0 408.7L356.3 410.7Z" fill="#c0f000" fill-opacity="0.25" stroke="#c0f000" stroke-width="1"/><path d="M350.9 417.4L359.5 397.9" stroke="#c0f000"/><path d="M354.3 411.6L362.7 399.7" stroke="#c0f000"/><path d="M347.4 423.3L360.6 398.5" stroke="#c0f000"/><path d="M355.5 435.0L378.5 405.5" stroke="#c0f000"/><path d="M378.5 405.5L368.3 414.6L371.2 416.9Z" fill="#c0f000" fill-opacity="0.25" stroke="#c0f000" stroke-width="1"/><path d="M365.9 421.7L374.7 406.3" stroke="#c0f000"/><path d="M369.3 417.3L377.6 408.6" stroke="#c0f000"/><path d="M362.4 426.1L375.7 407.1" stroke="#c0f000"/><path d="M370.5 435.0L390.5 400.0" stroke="#40ff00"/><path d="M390.5 400.0L381.0 411.3L384.4 413.2Z" fill="#40ff00" fill-opacity="0.25" stroke="#40ff00" stroke-width="1"/><path d="M379.5 419.2L386.7 401.6" stroke="#40ff00"/><path d="M382.5 414.0L389.9 403.4" stroke="#40ff00"/><path d="M376.5 424.5L387.9 402.2" stroke="#40ff00"/><path d="M386.5 435.0L398.5 403.0" stroke="#00ff00"/><path d="M398.5 403.0L392.1 413.7L395.2 414.9Z" fill="#00ff00" fill-opacity="0.90" stroke="#00ff00" stroke-width="1"/><path d="M402.0 435.0L409.0 418.0" stroke="#00ff00"/><path d="M409.0 418.0L405.0 423.5L407.2 424.4Z" fill="#00ff00" fill-opacity="0.90" stroke="#00ff00" stroke-width="1"/><path d="M416.5 435.0L421.5 427.3" stroke="#20b0e0"/><path d="M421.5 427.3L418.4 429.2L420.4 430.5Z" fill="#20b0e0" fill-opacity="0.90" stroke="#20b0e0" stroke-width="1"/><path d="M432.5 435.0L438.8 415.0" stroke="#00ff00"/><path d="M438.8 415.0L435.0 421.7L437.3 422.4Z" fill="#00ff00" fill-opacity="0.90" stroke="#00ff00" stroke-width="1"/><path d="M448.5 435.0L451.5 397.0" stroke="#40ff00"/><path d="M451.5 397.0L447.9 410.5L451.7 410.8Z" fill="#40ff00" fill-opacity="0.25" stroke="#40ff00" stroke-width="1"/><path d="M449.9 417.9L448.8 399.8" stroke="#40ff00"/><path d="M450.3 412.2L452.5 400.1" stroke="#40ff00"/><path d="M449.4 423.6L450.1 399.9" stroke="#40ff00"/><path d="M463.5 435.0L467.7 420.0" stroke="#00ff00"/><path d="M467.7 420.0L464.6 425.0L467.0 425.6Z" fill="#00ff00" fill-opacity="0.90" stroke="#00ff00" stroke-width="1"/><path d="M478.5 435.0L481.3 427.3" stroke="#20b0e0"/><path d="M490.5 435.0L493.9 422.4" stroke="#00ff00"/><path d="M493.9 422.4L491.1 426.5L493.4 427.1Z" fill="#00ff00" fill-opacity="0.90" stroke="#00ff00" stroke-width="1"/><path d="M504.0 435.0L504.5 410.0" stroke="#00ff00"/><path d="M504.5 410.0L502.7 419.0L505.1 419.0Z" fill="#00ff00" fill-opacity="0.90" stroke="#00ff00" stroke-width="1"/><path d="M314.0 451.0L388.0 420.0" stroke="#f0d000"/><path d="M388.0 420.0L360.4 428.8L361.9 432.4Z" fill="#f0d000" fill-opacity="0.25" stroke="#f0d000" stroke-width="1"/><path d="M347.3 437.1L381.1 420.2" stroke="#f0d000"/><path d="M358.4 432.4L382.5 423.6" stroke="#f0d000"/><path d="M336.2 441.7L381.6 421.4" stroke="#f0d000"/><path d="M328.0 451.0L388.0 428.5" stroke="#f0d000"/><path d="M388.0 428.5L365.5 434.2L366.9 437.8Z" fill="#f0d000" fill-opacity="0.25" stroke="#f0d000" stroke-width="1"/><path d="M355.0 440.9L382.3 428.0" stroke="#f0d000"/><path d="M364.0 437.5L383.6 431.4" stroke="#f0d000"/><path d="M346.0 444.2L382.8 429.2" stroke="#f0d000"/><path d="M340.5 451.0L387.5 429.0" stroke="#f0d000"/><path d="M387.5 429.0L369.5 434.6L371.1 438.1Z" fill="#f0d000" fill-opacity="0.25" stroke="#f0d000" stroke-width="1"/><path d="M361.6 441.1L382.7 428.5" stroke="#f0d000"/><path d="M368.7 437.8L384.2 431.8" stroke="#f0d000"/><path d="M354.6 444.4L383.2 429.7" stroke="#f0d000"/><path d="M355.5 451.0L389.5 429.0" stroke="#f0d000"/><path d="M389.5 429.0L375.8 434.7L378.0 438.0Z" fill="#f0d000" fill-opacity="0.25" stroke="#f0d000" stroke-width="1"/><path d="M370.8 441.1L385.4 428.7" stroke="#f0d000"/><path d="M375.9 437.8L387.4 431.8" stroke="#f0d000"/><path d="M365.7 444.4L386.1 429.8" stroke="#f0d000"/><path d="M370.5 451.0L397.5 429.5" stroke="#c0f000"/><path d="M397.5 429.5L386.4 435.5L388.5 438.1Z" fill="#c0f000" fill-opacity="0.90" stroke="#c0f000" stroke-width="1"/><path d="M386.5 451.0L400.5 423.0" stroke="#00ff00"/><path d="M400.5 423.0L393.6 432.2L396.4 433.5Z" fill="#00ff00" fill-opacity="0.90" stroke="#00ff00" stroke-width="1"/><path d="M402.0 451.0L409.0 434.0" stroke="#c0f000"/><path d="M409.0 434.0L405.0 439.5L407.2 440.4Z" fill="#c0f000" fill-opacity="0.90" stroke="#c0f000" stroke-width="1"/><path d="M416.5 451.0L423.5 437.7" stroke="#c0f000"/><path d="M423.5 437.7L419.6 441.7L421.7 442.9Z" fill="#c0f000" fill-opacity="0.90" stroke="#c0f000" stroke-width="1"/><path d="M432.5 451.0L440.9 427.0" stroke="#c0f000"/><path d="M440.9 427.0L436.3 435.1L438.7 435.9Z" fill="#c0f000" fill-opacity="0.90" stroke="#c0f000" stroke-width="1"/><path d="M448.5 451.0L450.5 412.0" stroke="#c0f000"/><path d="M450.5 412.0L447.2 425.9L451.0 426.1Z" fill="#c0f000" fill-opacity="0.25" stroke="#c0f000" stroke-width="1"/><path d="M449.4 433.4L447.8 415.0" stroke="#c0f000"/><path d="M449.7 427.6L451.5 415.2" stroke="#c0f000"/><path d="M449.1 439.3L449.1 415.1" stroke="#c0f000"/><path d="M463.5 451.0L466.3 436.3" stroke="#c0f000"/><path d="M466.3 436.3L463.7 441.3L466.1 441.7Z" fill="#c0f000" fill-opacity="0.90" stroke="#c0f000" stroke-width="1"/><path d="M478.5 451.0L482.7 440.0" stroke="#c0f000"/><path d="M482.7 440.0L479.7 443.4L481.9 444.2Z" fill="#c0f000" fill-opacity="0.90" stroke="#c0f000" stroke-width="1"/><path d="M490.5 451.0L496.8 435.0" stroke="#c0f000"/><path d="M496.8 435.0L493.0 440.2L495.3 441.1Z" fill="#c0f000" fill-opacity="0.90" stroke="#c0f000" stroke-width="1"/><path d="M504.0 451.0L505.0 421.0" stroke="#00ff00"/><path d="M505.0 421.0L502.7 431.7L505.6 431.8Z" fill="#00ff00" fill-opacity="0.90" stroke="#00ff00" stroke-width="1"/><path d="M314.0 466.3L395.0 451.3" stroke="#f0d000"/><path d="M395.0 451.3L365.4 454.1L366.1 458.0Z" fill="#f0d000" fill-opacity="0.25" stroke="#f0d000" stroke-width="1"/><path d="M350.4 459.6L388.1 450.0" stroke="#f0d000"/><path d="M362.6 457.3L388.7 453.7" stroke="#f0d000"/><path d="M338.3 461.8L388.3 451.3" stroke="#f0d000"/><path d="M328.0 466.3L396.0 452.3" stroke="#f0d000"/><path d="M396.0 452.3L371.0 454.8L371.8 458.6Z" fill="#f0d000" fill-opacity="0.25" stroke="#f0d000" stroke-width="1"/><path d="M358.6 460.0L390.1 451.0" stroke="#f0d000"/><path d="M368.8 457.9L390.8 454.6" stroke="#f0d000"/><path d="M348.4 462.1L390.3 452.2" stroke="#f0d000"/><path d="M340.5 466.3L396.5 452.3" stroke="#f0d000"/><path d="M396.5 452.3L375.7 454.8L376.7 458.6Z" fill="#f0d000" fill-opacity="0.25" stroke="#f0d000" stroke-width="1"/><path d="M365.7 460.0L391.4 451.0" stroke="#f0d000"/><path d="M374.1 457.9L392.3 454.6" stroke="#f0d000"/><path d="M357.3 462.1L391.7 452.3" stroke="#f0d000"/><path d="M355.5 466.3L397.5 453.3" stroke="#f0d000"/><path d="M397.5 453.3L381.6 455.5L382.8 459.2Z" fill="#f0d000" fill-opacity="0.25" stroke="#f0d000" stroke-width="1"/><path d="M374.4 460.4L393.4 452.0" stroke="#f0d000"/><path d="M380.7 458.5L394.5 455.5" stroke="#f0d000"/><path d="M368.1 462.4L393.8 453.2" stroke="#f0d000"/><path d="M370.5 466.3L398.5 454.3" stroke="#f0d000"/><path d="M398.5 454.3L387.6 456.8L388.8 459.5Z" fill="#f0d000" fill-opacity="0.90" stroke="#f0d000" stroke-width="1"/><path d="M386.5 466.3L400.5 444.3" stroke="#00ff00"/><path d="M400.5 444.3L394.0 451.3L396.2 452.7Z" fill="#00ff00" fill-opacity="0.90" stroke="#00ff00" stroke-width="1"/><path d="M402.0 466.3L410.0 449.3" stroke="#f0b000"/><path d="M410.0 449.3L405.7 454.7L407.8 455.8Z" fill="#f0b000" fill-opacity="0.90" stroke="#f0b000" stroke-width="1"/><path d="M416.5 466.3L426.5 449.3" stroke="#f0b000"/><path d="M426.5 449.3L421.5 454.6L423.6 455.8Z" fill="#f0b000" fill-opacity="0.90" stroke="#f0b000" stroke-width="1"/><path d="M432.5 466.3L443.5 439.6" stroke="#c0f000"/><path d="M443.5 439.6L437.8 448.5L440.4 449.6Z" fill="#c0f000" fill-opacity="0.90" stroke="#c0f000" stroke-width="1"/><path d="M448.5 466.3L451.5 430.3" stroke="#c0f000"/><path d="M451.5 430.3L448.1 443.1L451.6 443.4Z" fill="#c0f000" fill-opacity="0.25" stroke="#c0f000" stroke-width="1"/><path d="M449.9 450.1L448.8 433.0" stroke="#c0f000"/><path d="M450.3 444.7L452.5 433.3" stroke="#c0f000"/><path d="M449.4 455.5L450.1 433.1" stroke="#c0f000"/><path d="M463.5 466.3L466.3 449.3" stroke="#f0d000"/><path d="M466.3 449.3L463.7 455.2L466.1 455.6Z" fill="#f0d000" fill-opacity="0.90" stroke="#f0d000" stroke-width="1"/><path d="M478.5 466.3L484.8 451.6" stroke="#f0d000"/><path d="M484.8 451.6L481.1 456.3L483.3 457.2Z" fill="#f0d000" fill-opacity="0.90" stroke="#f0d000" stroke-width="1"/><path d="M490.5 466.3L499.9 446.6" stroke="#c0f000"/><path d="M499.9 446.6L495.1 453.0L497.2 454.0Z" fill="#c0f000" fill-opacity="0.90" stroke="#c0f000" stroke-width="1"/><path d="M504.0 466.3L505.0 436.3" stroke="#00ff00"/><path d="M505.0 436.3L502.7 447.0L505.6 447.1Z" fill="#00ff00" fill-opacity="0.90" stroke="#00ff00" stroke-width="1"/><path d="M314.0 481.5L394.0 473.5" stroke="#f0b000"/><path d="M394.0 473.5L364.9 473.8L365.3 477.7Z" fill="#f0b000" fill-opacity="0.25" stroke="#f0b000" stroke-width="1"/><path d="M350.0 477.9L387.4 471.7" stroke="#f0b000"/><path d="M362.0 476.7L387.7 475.3" stroke="#f0b000"/><path d="M338.0 479.1L387.5 472.9" stroke="#f0b000"/><path d="M328.0 481.5L398.0 473.5" stroke="#f0b000"/><path d="M398.0 473.5L372.5 473.8L372.9 477.7Z" fill="#f0b000" fill-opacity="0.25" stroke="#f0b000" stroke-width="1"/><path d="M359.5 477.9L392.1 471.7" stroke="#f0b000"/><path d="M370.0 476.7L392.5 475.3" stroke="#f0b000"/><path d="M349.0 479.1L392.3 472.9" stroke="#f0b000"/><path d="M340.5 481.5L400.5 473.5" stroke="#f0b000"/><path d="M400.5 473.5L378.6 473.8L379.1 477.7Z" fill="#f0b000" fill-opacity="0.25" stroke="#f0b000" stroke-width="1"/><path d="M367.5 477.9L395.4 471.7" stroke="#f0b000"/><path d="M376.5 476.7L395.9 475.3" stroke="#f0b000"/><path d="M358.5 479.1L395.5 473.0" stroke="#f0b000"/><path d="M355.5 481.5L403.5 474.5" stroke="#f0b000"/><path d="M403.5 474.5L385.8 474.4L386.4 478.3Z" fill="#f0b000" fill-opacity="0.25" stroke="#f0b000" stroke-width="1"/><path d="M377.1 478.4L399.3 472.6" stroke="#f0b000"/><path d="M384.3 477.3L399.8 476.2" stroke="#f0b000"/><path d="M369.9 479.4L399.5 473.9" stroke="#f0b000"/><path d="M370.5 481.5L406.5 475.5" stroke="#f0b000"/><path d="M406.5 475.5L393.2 475.3L393.7 478.8Z" fill="#f0b000" fill-opacity="0.25" stroke="#f0b000" stroke-width="1"/><path d="M386.7 478.8L403.2 473.5" stroke="#f0b000"/><path d="M392.1 477.9L403.8 477.2" stroke="#f0b000"/><path d="M381.3 479.7L403.4 474.8" stroke="#f0b000"/><path d="M386.5 481.5L415.5 464.5" stroke="#00ff00"/><path d="M415.5 464.5L404.0 468.7L405.6 471.6Z" fill="#00ff00" fill-opacity="0.90" stroke="#00ff00" stroke-width="1"/><path d="M402.0 481.5L423.0 464.5" stroke="#c0f000"/><path d="M423.0 464.5L414.3 469.3L416.0 471.3Z" fill="#c0f000" fill-opacity="0.90" stroke="#c0f000" stroke-width="1"/><path d="M416.5 481.5L435.5 463.5" stroke="#c0f000"/><path d="M435.5 463.5L427.5 468.7L429.2 470.6Z" fill="#c0f000" fill-opacity="0.90" stroke="#c0f000" stroke-width="1"/><path d="M432.5 481.5L450.0 459.0" stroke="#00ff00"/><path d="M450.0 459.0L442.2 466.0L444.4 467.7Z" fill="#00ff00" fill-opacity="0.90" stroke="#00ff00" stroke-width="1"/><path d="M448.5 481.5L458.5 453.5" stroke="#00ff00"/><path d="M458.5 453.5L453.1 462.9L455.8 463.9Z" fill="#00ff00" fill-opacity="0.90" stroke="#00ff00" stroke-width="1"/><path d="M463.5 481.5L469.8 466.8" stroke="#c0f000"/><path d="M469.8 466.8L466.1 471.5L468.3 472.4Z" fill="#c0f000" fill-opacity="0.90" stroke="#c0f000" stroke-width="1"/><path d="M478.5 481.5L494.5 456.5" stroke="#c0f000"/><path d="M494.5 456.5L487.1 464.5L489.6 466.0Z" fill="#c0f000" fill-opacity="0.90" stroke="#c0f000" stroke-width="1"/><path d="M490.5 481.5L505.2 464.5" stroke="#00ff00"/><path d="M505.2 464.5L498.7 469.6L500.5 471.1Z" fill="#00ff00" fill-opacity="0.90" stroke="#00ff00" stroke-width="1"/><path d="M504.0 481.5L511.7 462.5" stroke="#00ff00"/><path d="M511.7 462.5L507.4 468.7L509.7 469.6Z" fill="#00ff00" fill-opacity="0.90" stroke="#00ff00" stroke-width="1"/><path d="M314.0 496.0L399.0 491.0" stroke="#ffa000"/><path d="M399.0 491.0L368.2 490.2L368.5 494.1Z" fill="#ffa000" fill-opacity="0.25" stroke="#ffa000" stroke-width="1"/><path d="M352.2 493.8L392.1 488.9" stroke="#ffa000"/><path d="M365.0 493.0L392.3 492.6" stroke="#ffa000"/><path d="M339.5 494.5L392.1 490.2" stroke="#ffa000"/><path d="M328.0 496.0L408.0 490.0" stroke="#ffa000"/><path d="M408.0 490.0L379.0 489.6L379.3 493.5Z" fill="#ffa000" fill-opacity="0.25" stroke="#ffa000" stroke-width="1"/><path d="M364.0 493.3L401.4 488.0" stroke="#ffa000"/><path d="M376.0 492.4L401.7 491.7" stroke="#ffa000"/><path d="M352.0 494.2L401.5 489.3" stroke="#ffa000"/><path d="M340.5 496.0L415.5 489.0" stroke="#f0b000"/><path d="M415.5 489.0L388.3 488.9L388.6 492.8Z" fill="#f0b000" fill-opacity="0.25" stroke="#f0b000" stroke-width="1"/><path d="M374.2 492.9L409.3 487.1" stroke="#f0b000"/><path d="M385.5 491.8L409.6 490.8" stroke="#f0b000"/><path d="M363.0 493.9L409.4 488.4" stroke="#f0b000"/><path d="M355.5 496.0L425.5 487.0" stroke="#f0b000"/><path d="M425.5 487.0L400.0 487.7L400.5 491.5Z" fill="#f0b000" fill-opacity="0.25" stroke="#f0b000" stroke-width="1"/><path d="M387.0 491.9L419.6 485.2" stroke="#f0b000"/><path d="M397.5 490.6L420.1 488.9" stroke="#f0b000"/><path d="M376.5 493.3L419.7 486.5" stroke="#f0b000"/><path d="M370.5 496.0L435.5 485.0" stroke="#f0d000"/><path d="M435.5 485.0L411.7 486.4L412.3 490.2Z" fill="#f0d000" fill-opacity="0.25" stroke="#f0d000" stroke-width="1"/><path d="M399.8 491.1L429.9 483.4" stroke="#f0d000"/><path d="M409.5 489.4L430.5 487.1" stroke="#f0d000"/><path d="M390.0 492.7L430.1 484.7" stroke="#f0d000"/><path d="M386.5 496.0L446.5 483.0" stroke="#c0f000"/><path d="M446.5 483.0L424.3 485.1L425.2 489.0Z" fill="#c0f000" fill-opacity="0.25" stroke="#c0f000" stroke-width="1"/><path d="M413.5 490.1L441.2 481.6" stroke="#c0f000"/><path d="M422.5 488.2L442.0 485.2" stroke="#c0f000"/><path d="M404.5 492.1L441.4 482.9" stroke="#c0f000"/><path d="M402.0 496.0L452.0 479.0" stroke="#40ff00"/><path d="M452.0 479.0L433.2 482.7L434.4 486.4Z" fill="#40ff00" fill-opacity="0.25" stroke="#40ff00" stroke-width="1"/><path d="M424.5 488.4L447.2 478.0" stroke="#40ff00"/><path d="M432.0 485.8L448.4 481.5" stroke="#40ff00"/><path d="M417.0 490.9L447.6 479.2" stroke="#40ff00"/><path d="M416.5 496.0L454.5 476.0" stroke="#00ff00"/><path d="M454.5 476.0L439.6 480.9L441.4 484.4Z" fill="#00ff00" fill-opacity="0.25" stroke="#00ff00" stroke-width="1"/><path d="M433.6 487.0L450.3 475.4" stroke="#00ff00"/><path d="M439.3 484.0L452.0 478.7" stroke="#00ff00"/><path d="M427.9 490.0L450.9 476.5" stroke="#00ff00"/><path d="M432.5 496.0L455.5 477.0" stroke="#00ff00"/><path d="M455.5 477.0L446.0 482.3L447.8 484.6Z" fill="#00ff00" fill-opacity="0.90" stroke="#00ff00" stroke-width="1"/><path d="M448.5 496.0L463.5 476.0" stroke="#00e0c0"/><path d="M463.5 476.0L456.8 482.2L458.8 483.7Z" fill="#00e0c0" fill-opacity="0.90" stroke="#00e0c0" stroke-width="1"/><path d="M463.5 496.0L474.5 481.0" stroke="#20b0e0"/><path d="M474.5 481.0L469.2 485.5L471.2 486.9Z" fill="#20b0e0" fill-opacity="0.90" stroke="#20b0e0" stroke-width="1"/><path d="M478.5 496.0L490.5 481.0" stroke="#20b0e0"/><path d="M490.5 481.0L484.9 485.4L486.8 486.9Z" fill="#20b0e0" fill-opacity="0.90" stroke="#20b0e0" stroke-width="1"/><path d="M490.5 496.0L503.1 481.0" stroke="#20b0e0"/><path d="M503.1 481.0L497.3 485.4L499.2 486.9Z" fill="#20b0e0" fill-opacity="0.90" stroke="#20b0e0" stroke-width="1"/><path d="M504.0 496.0L511.0 485.5" stroke="#20b0e0"/><path d="M511.0 485.5L507.1 488.4L509.1 489.7Z" fill="#20b0e0" fill-opacity="0.90" stroke="#20b0e0" stroke-width="1"/><path d="M314.0 511.0L306.6 508.3" stroke="#00ff00"/><path d="M328.0 511.0L321.3 504.3" stroke="#00e0c0"/><path d="M321.3 504.3L322.6 507.8L324.3 506.1Z" fill="#00e0c0" fill-opacity="0.90" stroke="#00e0c0" stroke-width="1"/><path d="M340.5 511.0L339.2 506.3" stroke="#00e0c0"/><path d="M355.5 511.0L358.9 505.0" stroke="#00e0c0"/><path d="M370.5 511.0L375.2 502.3" stroke="#20b0e0"/><path d="M375.2 502.3L372.1 504.7L374.2 505.8Z" fill="#20b0e0" fill-opacity="0.90" stroke="#20b0e0" stroke-width="1"/><path d="M386.5 511.0L391.9 500.0" stroke="#20b0e0"/><path d="M391.9 500.0L388.5 503.3L390.7 504.3Z" fill="#20b0e0" fill-opacity="0.90" stroke="#20b0e0" stroke-width="1"/><path d="M402.0 511.0L407.4 500.0" stroke="#20b0e0"/><path d="M407.4 500.0L404.0 503.3L406.2 504.3Z" fill="#20b0e0" fill-opacity="0.90" stroke="#20b0e0" stroke-width="1"/><path d="M416.5 511.0L425.5 495.5" stroke="#20b0e0"/><path d="M425.5 495.5L420.9 500.3L423.0 501.5Z" fill="#20b0e0" fill-opacity="0.90" stroke="#20b0e0" stroke-width="1"/><path d="M432.5 511.0L443.0 491.3" stroke="#20b0e0"/><path d="M443.0 491.3L437.8 497.6L439.9 498.8Z" fill="#20b0e0" fill-opacity="0.90" stroke="#20b0e0" stroke-width="1"/><path d="M448.5 511.0L457.5 491.0" stroke="#00e0c0"/><path d="M457.5 491.0L452.8 497.5L455.0 498.5Z" fill="#00e0c0" fill-opacity="0.90" stroke="#00e0c0" stroke-width="1"/><path d="M463.5 511.0L472.5 491.3" stroke="#20b0e0"/><path d="M472.5 491.3L467.8 497.7L470.0 498.7Z" fill="#20b0e0" fill-opacity="0.90" stroke="#20b0e0" stroke-width="1"/><path d="M478.5 511.0L487.5 493.0" stroke="#20b0e0"/><path d="M487.5 493.0L482.8 498.8L485.0 499.8Z" fill="#20b0e0" fill-opacity="0.90" stroke="#20b0e0" stroke-width="1"/><path d="M490.5 511.0L499.5 493.5" stroke="#20b0e0"/><path d="M499.5 493.5L494.8 499.1L497.0 500.2Z" fill="#20b0e0" fill-opacity="0.90" stroke="#20b0e0" stroke-width="1"/><path d="M504.0 511.0L509.6 505.4" stroke="#20b0e0"/><path d="M314.0 530.5L301.2 527.2" stroke="#20b0e0"/><path d="M301.2 527.2L306.2 526.8L305.6 529.2Z" fill="#20b0e0" fill-opacity="0.90" stroke="#20b0e0" stroke-width="1"/><path d="M328.0 530.5L316.6 511.7" stroke="#00e0c0"/><path d="M316.6 511.7L319.3 519.3L321.4 518.1Z" fill="#00e0c0" fill-opacity="0.90" stroke="#00e0c0" stroke-width="1"/><path d="M340.5 530.5L332.5 512.5" stroke="#20b0e0"/><path d="M332.5 512.5L333.9 519.6L336.1 518.7Z" fill="#20b0e0" fill-opacity="0.90" stroke="#20b0e0" stroke-width="1"/><path d="M355.5 530.5L352.8 512.5" stroke="#20b0e0"/><path d="M352.8 512.5L352.2 519.2L354.6 518.9Z" fill="#20b0e0" fill-opacity="0.90" stroke="#20b0e0" stroke-width="1"/><path d="M370.5 530.5L371.0 511.0" stroke="#20b0e0"/><path d="M371.0 511.0L369.2 518.0L371.6 518.0Z" fill="#20b0e0" fill-opacity="0.90" stroke="#20b0e0" stroke-width="1"/><path d="M386.5 530.5L387.8 510.5" stroke="#20b0e0"/><path d="M387.8 510.5L385.7 517.6L388.1 517.8Z" fill="#20b0e0" fill-opacity="0.90" stroke="#20b0e0" stroke-width="1"/><path d="M402.0 530.5L404.6 510.5" stroke="#20b0e0"/><path d="M404.6 510.5L402.1 517.5L404.5 517.8Z" fill="#20b0e0" fill-opacity="0.90" stroke="#20b0e0" stroke-width="1"/><path d="M416.5 530.5L421.5 508.0" stroke="#20b0e0"/><path d="M421.5 508.0L418.1 515.8L420.5 516.3Z" fill="#20b0e0" fill-opacity="0.90" stroke="#20b0e0" stroke-width="1"/><path d="M432.5 530.5L437.5 505.9" stroke="#20b0e0"/><path d="M437.5 505.9L434.1 514.4L436.5 514.9Z" fill="#20b0e0" fill-opacity="0.90" stroke="#20b0e0" stroke-width="1"/><path d="M448.5 530.5L453.5 505.9" stroke="#00e0c0"/><path d="M453.5 505.9L450.1 514.4L452.5 514.9Z" fill="#00e0c0" fill-opacity="0.90" stroke="#00e0c0" stroke-width="1"/><path d="M463.5 530.5L469.1 505.9" stroke="#20b0e0"/><path d="M469.1 505.9L465.5 514.4L467.9 514.9Z" fill="#20b0e0" fill-opacity="0.90" stroke="#20b0e0" stroke-width="1"/><path d="M478.5 530.5L485.5 506.5" stroke="#20b0e0"/><path d="M485.5 506.5L481.4 514.7L483.8 515.4Z" fill="#20b0e0" fill-opacity="0.90" stroke="#20b0e0" stroke-width="1"/><path d="M490.5 530.5L497.5 508.7" stroke="#20b0e0"/><path d="M497.5 508.7L493.5 516.1L495.7 516.8Z" fill="#20b0e0" fill-opacity="0.90" stroke="#20b0e0" stroke-width="1"/><path d="M504.0 530.5L509.0 527.5" stroke="#20b0e0"/><path d="M314.0 550.5L306.0 549.8" stroke="#20b0e0"/><path d="M328.0 550.5L321.3 527.5" stroke="#20b0e0"/><path d="M321.3 527.5L322.2 536.2L324.5 535.6Z" fill="#20b0e0" fill-opacity="0.90" stroke="#20b0e0" stroke-width="1"/><path d="M340.5 550.5L335.8 527.0" stroke="#20b0e0"/><path d="M335.8 527.0L335.9 535.8L338.3 535.3Z" fill="#20b0e0" fill-opacity="0.90" stroke="#20b0e0" stroke-width="1"/><path d="M355.5 550.5L353.8 529.0" stroke="#20b0e0"/><path d="M353.8 529.0L352.8 536.9L355.2 536.7Z" fill="#20b0e0" fill-opacity="0.90" stroke="#20b0e0" stroke-width="1"/><path d="M370.5 550.5L370.5 529.5" stroke="#20b0e0"/><path d="M370.5 529.5L368.9 537.1L371.3 537.1Z" fill="#20b0e0" fill-opacity="0.90" stroke="#20b0e0" stroke-width="1"/><path d="M386.5 550.5L387.0 529.5" stroke="#20b0e0"/><path d="M387.0 529.5L385.2 537.0L387.6 537.1Z" fill="#20b0e0" fill-opacity="0.90" stroke="#20b0e0" stroke-width="1"/><path d="M402.0 550.5L403.3 528.5" stroke="#20b0e0"/><path d="M403.3 528.5L401.2 536.3L403.6 536.5Z" fill="#20b0e0" fill-opacity="0.90" stroke="#20b0e0" stroke-width="1"/><path d="M416.5 550.5L419.0 526.5" stroke="#20b0e0"/><path d="M419.0 526.5L416.5 535.0L418.9 535.2Z" fill="#20b0e0" fill-opacity="0.90" stroke="#20b0e0" stroke-width="1"/><path d="M432.5 550.5L435.5 527.5" stroke="#20b0e0"/><path d="M435.5 527.5L432.8 535.6L435.2 535.9Z" fill="#20b0e0" fill-opacity="0.90" stroke="#20b0e0" stroke-width="1"/><path d="M448.5 550.5L451.3 525.5" stroke="#00e0c0"/><path d="M451.3 525.5L448.7 534.3L451.1 534.6Z" fill="#00e0c0" fill-opacity="0.90" stroke="#00e0c0" stroke-width="1"/><path d="M463.5 550.5L466.3 526.5" stroke="#20b0e0"/><path d="M466.3 526.5L463.7 535.0L466.1 535.2Z" fill="#20b0e0" fill-opacity="0.90" stroke="#20b0e0" stroke-width="1"/><path d="M478.5 550.5L482.5 524.5" stroke="#20b0e0"/><path d="M482.5 524.5L479.4 533.6L481.9 534.0Z" fill="#20b0e0" fill-opacity="0.90" stroke="#20b0e0" stroke-width="1"/><path d="M490.5 550.5L495.0 526.5" stroke="#20b0e0"/><path d="M495.0 526.5L491.8 534.8L494.2 535.3Z" fill="#20b0e0" fill-opacity="0.90" stroke="#20b0e0" stroke-width="1"/><path d="M504.0 550.5L508.0 549.0" stroke="#20b0e0"/></g>
<rect x="304.5" y="81.5" width="210" height="479" fill="none" stroke="#ff0000" stroke-width="1"/>
<line x1="305" y1="297.5" x2="514" y2="297.5" stroke="#808080"/>
<line x1="304" y1="306.5" x2="515" y2="306.5" stroke="#808080"/>
<line x1="305" y1="334.5" x2="514" y2="334.5" stroke="#808080"/>
</svg>
<div id="sb" class="abs">
<div class="abs" style="left:0;top:0;width:819px;height:2px;background:#9fcab3"></div>
<div class="abs" style="left:0;top:2px;width:819px;height:1px;background:#6a9a80"></div>
<div class="abs" style="left:0;top:3px;width:1px;height:22px;background:#6a9a80"></div>
<div class="abs" style="left:818px;top:2px;width:1px;height:5px;background:#dcdcdc"></div>
<div class="abs" style="left:0;top:25px;width:800px;height:1px;background:#dcdcdc"></div>
<div class="abs" style="left:3px;top:4.5px;will-change:transform;font-family:'Liberation Serif',serif;font-size:16.5px;line-height:18px;color:#000;letter-spacing:0.6px">Ready</div>
<svg class="abs" style="left:800px;top:0" width="19" height="26" viewBox="0 0 19 26" shape-rendering="crispEdges">
<path d="M5 25L18 12M10 25L18 17M15 25L18 22" stroke="#5f8f76" stroke-width="2.5"/>
<path d="M3 25L18 10M8 25L18 15M13 25L18 20" stroke="#e8e8e8" stroke-width="1.2"/>
</svg>
</div>
</body></html>
